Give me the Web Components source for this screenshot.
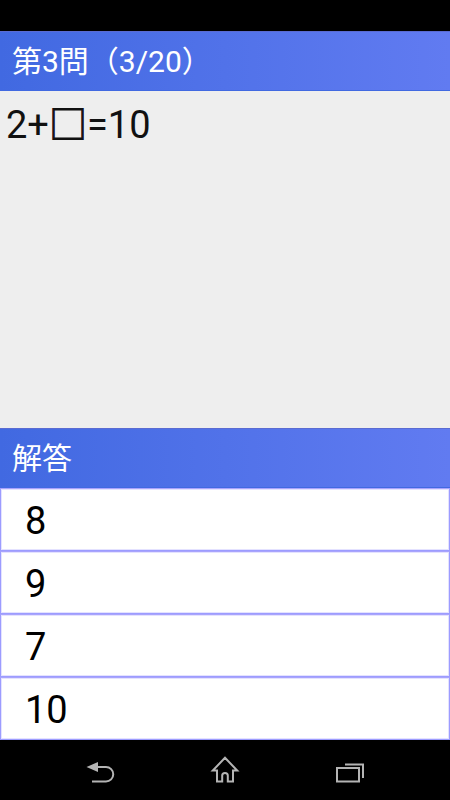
<!DOCTYPE html>
<html lang="ja">
<head>
<meta charset="utf-8">
<meta name="viewport" content="width=device-width, initial-scale=1">
<title>計算クイズ</title>
<style>
    body {
        margin: 0;
        background-color: #000;
        font-family: Roboto, "Noto Sans CJK JP", sans-serif;
    }
    .blank {
        -webkit-text-stroke: 1px #111;
    }
</style>
</head>
<body>
<quiz-screen>
    <title-bar slot="title">第3問（3/20）</title-bar>
    <question-panel slot="question">2+<span class="blank">□</span>=10</question-panel>
    <title-bar slot="answer-title">解答</title-bar>
    <answer-item slot="answers">8</answer-item>
    <answer-item slot="answers">9</answer-item>
    <answer-item slot="answers">7</answer-item>
    <answer-item slot="answers">10</answer-item>
</quiz-screen>

<script>
const screenTemplate = document.createElement('template');
screenTemplate.innerHTML = `
    <style>
    :host {
        display: flex;
        flex-direction: column;
        min-height: 100vh;
    }
    .status {
        height: 31px;
        background-color: #000;
    }
    main {
        flex: 1;
        display: flex;
        flex-direction: column;
    }
    .question {
        flex: 1;
        display: flex;
        flex-direction: column;
    }
    .answers {
        display: flex;
        flex-direction: column;
    }
    </style>

    <div class="status"></div>
    <main>
        <slot name="title"></slot>
        <div class="question"><slot name="question"></slot></div>
        <slot name="answer-title"></slot>
        <div class="answers"><slot name="answers"></slot></div>
    </main>
    <nav-bar></nav-bar>
`;

class QuizScreen extends HTMLElement {
    constructor() {
        super();
        this.attachShadow({ mode: 'open' }).appendChild(screenTemplate.content.cloneNode(true));
    }
}

const titleTemplate = document.createElement('template');
titleTemplate.innerHTML = `
    <style>
    :host {
        display: block;
        box-sizing: border-box;
        height: 60px;
        padding: 1px 12px 0;
        color: #fff;
        background-image: linear-gradient(to right, #4169e1, #617bf1);
        border-top: 1px solid #5a6bd2;
        border-bottom: 1px solid #4169e1;
    }
    h2 {
        margin: 0;
        font-size: 30px;
        line-height: 58px;
        font-weight: 400;
    }
    </style>

    <h2><slot></slot></h2>
`;

class TitleBar extends HTMLElement {
    constructor() {
        super();
        this.attachShadow({ mode: 'open' }).appendChild(titleTemplate.content.cloneNode(true));
    }
}

const questionTemplate = document.createElement('template');
questionTemplate.innerHTML = `
    <style>
    :host {
        display: block;
        flex: 1;
        padding: 9px 6px;
        color: #111;
        background-color: #eee;
    }
    p {
        margin: 0;
        font-size: 38px;
        line-height: 50px;
    }
    </style>

    <p><slot></slot></p>
`;

class QuestionPanel extends HTMLElement {
    constructor() {
        super();
        this.attachShadow({ mode: 'open' }).appendChild(questionTemplate.content.cloneNode(true));
    }
}

const answerTemplate = document.createElement('template');
answerTemplate.innerHTML = `
    <style>
    :host {
        display: block;
    }
    button {
        display: block;
        box-sizing: border-box;
        width: 100%;
        height: 63px;
        margin: 0;
        padding: 2px 24px 0;
        border: 1px solid #9c9cff;
        border-top-color: #a9a4fc;
        box-shadow: inset 0 0 0 1px #e4e2ff;
        background-color: #fff;
        color: #000;
        font-family: inherit;
        font-size: 38px;
        line-height: 58px;
        text-align: left;
    }
    </style>

    <button type="button"><slot></slot></button>
`;

class AnswerItem extends HTMLElement {
    constructor() {
        super();
        this.attachShadow({ mode: 'open' }).appendChild(answerTemplate.content.cloneNode(true));
    }
}

const navTemplate = document.createElement('template');
navTemplate.innerHTML = `
    <style>
    :host {
        display: block;
        background-color: #000;
    }
    nav {
        display: flex;
        justify-content: space-between;
        height: 60px;
        padding: 0 80px;
    }
    button {
        width: 40px;
        padding: 0;
        border: 0;
        background: none;
        color: #b4b4b4;
    }
    svg {
        display: block;
        width: 40px;
        height: 60px;
        fill: none;
        stroke: currentColor;
        stroke-width: 2;
    }
    </style>

    <nav>
        <button type="button" aria-label="戻る">
            <svg viewBox="0 0 40 60">
                <path d="M17 27H26A7.200 7.200 0 0 1 26 41.500H12"/>
                <path d="M6.500 27L18 22V32Z" fill="currentColor" stroke="none"/>
            </svg>
        </button>
        <button type="button" aria-label="ホーム">
            <svg viewBox="0 0 40 60">
                <path d="M20 17.800L7.800 30.500H12V41.500H17.200V35.500Q17.200 33 20 33T22.800 35.500V41.500H28V30.500H32.200Z"/>
            </svg>
        </button>
        <button type="button" aria-label="最近使ったアプリ">
            <svg viewBox="0 0 40 60">
                <path d="M7 28H29V41.500H7Z"/>
                <path d="M15 24.500H33V38"/>
            </svg>
        </button>
    </nav>
`;

class NavBar extends HTMLElement {
    constructor() {
        super();
        this.attachShadow({ mode: 'open' }).appendChild(navTemplate.content.cloneNode(true));
    }
}

customElements.define('title-bar', TitleBar);
customElements.define('question-panel', QuestionPanel);
customElements.define('answer-item', AnswerItem);
customElements.define('nav-bar', NavBar);
customElements.define('quiz-screen', QuizScreen);
</script>
</body>
</html>
